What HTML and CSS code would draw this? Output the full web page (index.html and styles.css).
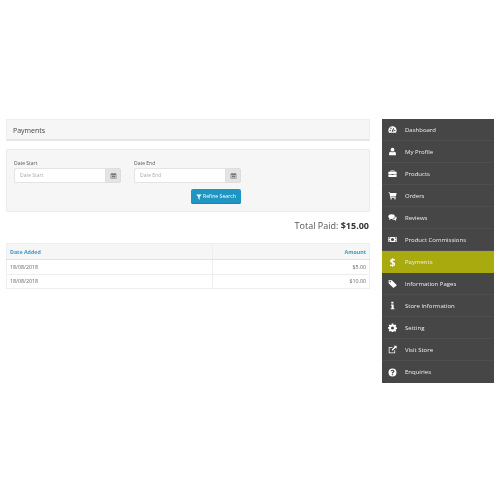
FILE: index.html
```html
<!DOCTYPE html>
<html lang="en">
<head>
<meta charset="utf-8">
<title>Payments</title>
<link rel="stylesheet" href="styles.css">
</head>
<body>
<div class="page">
  <main class="main">
    <div class="heading">Payments</div>
    <form class="filter">
      <div class="fields">
        <div class="field">
          <label class="label">Date Start</label>
          <div class="group">
            <div class="input">Date Start</div>
            <div class="addon"><svg class="cal" viewBox="0 0 12 12"><path d="M1 3.500c0-.6.4-1 1-1h1V1.500h1.500v1h3v-1H9v1h1c.6 0 1 .4 1 1V11H1z M2 5v5h8V5z" fill-rule="evenodd"/><path d="M3 6h6v3H3z"/></svg></div>
          </div>
        </div>
        <div class="field">
          <label class="label">Date End</label>
          <div class="group">
            <div class="input">Date End</div>
            <div class="addon"><svg class="cal" viewBox="0 0 12 12"><path d="M1 3.500c0-.6.4-1 1-1h1V1.500h1.500v1h3v-1H9v1h1c.6 0 1 .4 1 1V11H1z M2 5v5h8V5z" fill-rule="evenodd"/><path d="M3 6h6v3H3z"/></svg></div>
          </div>
        </div>
      </div>
      <div class="actions">
        <div class="btn"><svg class="funnel" viewBox="0 0 10 10"><path d="M.5 1h9L6 5v4.500L4 8V5z"/></svg>Refine Search</div>
      </div>
    </form>
    <div class="total">Total Paid: <b>$15.00</b></div>
    <table class="table">
      <thead>
        <tr><th class="left">Date Added</th><th class="right">Amount</th></tr>
      </thead>
      <tbody>
        <tr><td class="left">18/08/2018</td><td class="right">$5.00</td></tr>
        <tr><td class="left">18/08/2018</td><td class="right">$10.00</td></tr>
      </tbody>
    </table>
  </main>
  <nav class="side">
    <a class="item"><svg class="ico" viewBox="0 0 12 12"><path fill-rule="evenodd" d="M6 1.800C2.800 1.800.5 4.300.5 7.400c0 1 .3 2 .8 2.800h9.400c.5-.8.8-1.800.8-2.800 0-3.100-2.300-5.600-5.500-5.600zM3 8.200a.9.900 0 1 1 0-1.800.9.900 0 0 1 0 1.800zm1-3a.9.900 0 1 1 0-1.800.9.900 0 0 1 0 1.800zm2.800 3.600a1 1 0 0 1-1.700-1L7.600 3.600l.6.300-1 3.800c-.1.400 0 .8-.4 1.100zM9 8.200a.9.900 0 1 1 0-1.800.9.900 0 0 1 0 1.800z"/></svg><span>Dashboard</span></a>
    <a class="item"><svg class="ico" viewBox="0 0 12 12"><circle cx="6" cy="3.600" r="2.500"/><path d="M1.500 11V8.400c0-1.300.9-2.200 2.200-2.200.6.500 1.400.8 2.300.8s1.700-.3 2.300-.8c1.300 0 2.200.9 2.200 2.200V11z"/></svg><span>My Profile</span></a>
    <a class="item"><svg class="ico" viewBox="0 0 12 12"><path d="M4 2h4c.4 0 .8.4.8.8V3.500H11c.3 0 .5.200.5.500v2.600h-11V4c0-.3.200-.5.500-.5h2.200v-.7C3.200 2.400 3.600 2 4 2zm.1.900v.6h3.800v-.6z M.5 7.200h4.300V8h2.400v-.8h4.300V10c0 .3-.2.500-.5.500H1c-.3 0-.5-.2-.5-.5z" fill-rule="evenodd"/></svg><span>Products</span></a>
    <a class="item"><svg class="ico" viewBox="0 0 12 12"><path d="M.5 1.500h2l.3 1.200h8.700L10.400 7.400H3.800l.2 1h6.300v.9H3.200L1.800 2.400H.5z"/><circle cx="4.200" cy="10.300" r="1"/><circle cx="9.300" cy="10.300" r="1"/></svg><span>Orders</span></a>
    <a class="item"><svg class="ico" viewBox="0 0 12 12"><ellipse cx="4.800" cy="4.800" rx="4.300" ry="3.100"/><path d="M2 6.500 1.500 9.300 4.500 7.500z"/><path d="M10.200 4.200c.9.600 1.400 1.400 1.400 2.300 0 .9-.5 1.600-1.200 2.100l.5 1.900-2.300-1.400c-1.500.1-2.800-.3-3.500-1 2.800 0 5.200-1.500 5.100-3.900z"/></svg><span>Reviews</span></a>
    <a class="item"><svg class="ico" viewBox="0 0 14 12"><path fill-rule="evenodd" d="M.5 2h13v8H.5zM1.500 3v6h2.200c0-1-1-2-2.200-2V5c1.200 0 2.200-1 2.200-2zm9 0c0 1 1 2 2 2v2c-1 0-2 1-2 2h2V3zM7 3.500a2.500 2.500 0 1 0 0 5 2.500 2.500 0 0 0 0-5z"/></svg><span>Product Commissions</span></a>
    <a class="item active"><span class="dollar">$</span><span>Payments</span></a>
    <a class="item"><svg class="ico" viewBox="0 0 12 12"><path fill-rule="evenodd" d="M.8 1.500h4.300L11.200 7.600c.4.400.4 1 0 1.400L8 11.200c-.4.400-1 .4-1.400 0L.8 5.500zM3 2.700a1 1 0 1 0 0 2 1 1 0 0 0 0-2z"/></svg><span>Information Pages</span></a>
    <a class="item"><svg class="ico" viewBox="0 0 12 12"><path d="M4.400 1h2.800v2.200H4.400zM3.900 4.600h3.600v5h1v1.400H3.700V9.600h1.100V6H3.900z"/></svg><span>Store Information</span></a>
    <a class="item"><svg class="ico" viewBox="0 0 12 12"><path fill-rule="evenodd" d="M5 .8h2l.3 1.500 1 .4L9.600 2l1.400 1.400-.8 1.300.4 1 1.500.3v2l-1.500.3-.4 1 .8 1.300L9.600 11.500l-1.300-.8-1 .4-.3 1.400H5l-.3-1.400-1-.4-1.300.8L1 10.100l.8-1.300-.4-1L0 7.500v-2l1.400-.3.4-1L1 3.400 2.400 2l1.300.7 1-.4zM6 4.500a2 2 0 1 0 0 4 2 2 0 0 0 0-4z"/></svg><span>Setting</span></a>
    <a class="item"><svg class="ico" viewBox="0 0 12 12"><path d="M1.800 2.500H6v1H2v6.500h6.500V7h1v3.200c0 .5-.4.800-.8.800H1.800c-.5 0-.8-.3-.8-.8V3.300c0-.5.300-.8.800-.8z"/><path d="M7.500 1H11.500v4L10 3.600 6 7.500 4.800 6.300 8.800 2.400z"/></svg><span>Visit Store</span></a>
    <a class="item"><svg class="ico" viewBox="0 0 12 12"><path fill-rule="evenodd" d="M6 .7a5.300 5.300 0 1 0 0 10.600A5.300 5.300 0 0 0 6 .700zM5.100 8.200h1.700v1.500H5.100zm.9-6c1.500 0 2.600.9 2.600 2.100 0 1.500-1.800 1.600-1.800 3H5.100c0-2 1.700-2 1.700-2.900 0-.4-.4-.7-.9-.7s-.9.300-1.200.8L3.500 3.500c.5-.8 1.400-1.300 2.500-1.300z"/></svg><span>Enquiries</span></a>
  </nav>
</div>
</body>
</html>
```
FILE: styles.css
```css
* { box-sizing: border-box; }
html, body { margin: 0; padding: 0; background: #fff; }
body { font-family: "Open Sans", sans-serif; color: #666; width: 500px; height: 500px; overflow: hidden; }
.page { display: flex; gap: 12px; padding: 119px 6px 0 6px; align-items: flex-start; filter: blur(.3px); }
.main { width: 364px; flex: none; }
.heading {
  height: 22px; padding-left: 6px; line-height: 21px; font-size: 7px; color: #444;
  background: #f6f6f6; border: 1px solid #eee; border-bottom: 2px solid #e6e6e6; border-radius: 1px;
}
.filter {
  margin-top: 8px; height: 63px; padding: 9px 7px 0 7px;
  background: #f6f6f6; border: 1px solid #ebebeb; border-radius: 1px;
}
.fields { display: flex; gap: 13px; }
.field { width: 107px; }
.label { display: block; font-size: 5px; line-height: 9px; color: #555; height: 9px; }
.group { display: flex; height: 15px; }
.input {
  width: 91px; background: #fff; border: 1px solid #e4e4e4; border-right: 0; border-radius: 2px 0 0 2px;
  padding-left: 5px; font-size: 5px; line-height: 13px; color: #aaa;
}
.addon {
  width: 16px; background: #e4e4e4; border: 1px solid #dedede; border-radius: 0 2px 2px 0;
  display: flex; align-items: center; justify-content: center;
}
.cal { width: 7px; height: 7px; fill: #777; }
.actions { display: flex; justify-content: flex-end; margin-top: 6px; width: 227px; }
.btn {
  width: 50px; height: 15px; background: #1f95c4; border-radius: 2px; color: #fff;
  font-size: 5.200px; line-height: 15px; display: flex; align-items: center; justify-content: center;
  box-shadow: inset 0 -1px 0 #1b86b0;
}
.funnel { width: 6px; height: 6px; fill: #fff; margin-right: 1px; }
.total { height: 31px; padding-top: 6px; text-align: right; font-size: 9px; line-height: 16px; color: #555; padding-right: 1px; }
.total b { color: #333; font-weight: 700; }
.table { width: 364px; border-collapse: collapse; table-layout: fixed; font-size: 5.300px; }
.table th, .table td { border: 1px solid #eee; padding: 0 3px; }
.table th { height: 16px; background: #f6f6f6; color: #3a9bc8; font-weight: 700; border-bottom: 1px solid #e2e2e2; }
.table td { height: 14.500px; color: #666; }
.table .left { text-align: left; width: 206px; }
.table .right { text-align: right; }
.side { width: 112px; flex: none; background: #464646; height: 264px; }
.item {
  display: flex; align-items: center; height: 22px; color: #eee; font-size: 6px;
  border-bottom: 1px solid #4e4e4e;
}
.item:last-child { border-bottom: 0; }
.item.active { background: #a9aa0d; border-bottom: 0; }
.ico { width: 9px; height: 9px; fill: #fff; margin-left: 6px; flex: none; }
.item .ico + span { margin-left: 8px; }
.dollar { width: 9px; margin-left: 6px; font-size: 10px; font-weight: 700; color: #fff; text-align: center; flex: none; }
.item .dollar + span { margin-left: 8px; }
```
